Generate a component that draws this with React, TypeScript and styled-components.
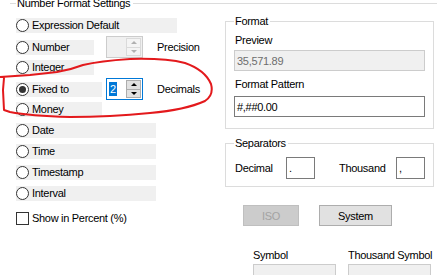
import React from "react";
import styled, { createGlobalStyle, css } from "styled-components";

const GlobalStyle = createGlobalStyle`
  html, body { margin: 0; padding: 0; background: #fff; }
  * { box-sizing: border-box; }
`;

const Page = styled.div`
  position: relative;
  width: 437px;
  height: 275px;
  overflow: hidden;
  background: #fff;
  font-family: "Liberation Sans", Arial, sans-serif;
  font-size: 11px;
  letter-spacing: -0.3px;
  color: #000;
`;

const Header = styled.div`
  display: flex;
  height: 14px;
  margin-top: -4px;
`;

const HeaderLine = styled.div<{ $short?: boolean }>`
  align-self: flex-start;
  margin-top: 7px;
  border-top: 1px solid #dcdcdc;
  ${(p) => (p.$short ? css`width: 6px; margin-left: 10px;` : css`flex: 1; margin-left: 3px;`)}
`;

const HeaderTitle = styled.div`
  line-height: 14px;
  padding-left: 1px;
  white-space: nowrap;
`;

const Body = styled.div`
  display: grid;
  grid-template-columns: 225px 209px;
`;

const LeftCol = styled.div`
  display: flex;
  flex-direction: column;
  padding-top: 5px;
  padding-left: 16px;
`;

const OptionRow = styled.div`
  display: grid;
  grid-template-columns: 90px 37px auto;
  align-items: center;
  height: 21px;
`;

const OptionLabel = styled.div<{ $w: number }>`
  display: flex;
  align-items: center;
  width: ${(p) => p.$w}px;
  height: 15px;
  background: #f0f0f0;
  white-space: nowrap;
`;

const Radio = styled.span<{ $checked?: boolean }>`
  position: relative;
  flex-shrink: 0;
  width: 13px;
  height: 13px;
  border: 1px solid #333;
  border-radius: 50%;
  background: #fff;
  ${(p) =>
    p.$checked &&
    css`
      &::after {
        content: "";
        position: absolute;
        left: 2px;
        top: 2px;
        width: 7px;
        height: 7px;
        border-radius: 50%;
        background: #333;
      }
    `}
`;

const OptionText = styled.span`
  margin-left: 3px;
  line-height: 13px;
`;

const SpinBox = styled.div<{ $disabled?: boolean; $focused?: boolean }>`
  display: flex;
  width: 37px;
  height: 22px;
  border: 1px solid ${(p) => (p.$focused ? "#0078d7" : "#cccccc")};
  background: ${(p) => (p.$disabled ? "#f0f0f0" : "#fff")};
`;

const SpinText = styled.div`
  flex: 1;
  display: flex;
  align-items: center;
  padding-left: 2px;
`;

const Selected = styled.span`
  background: #0078d7;
  color: #fff;
  line-height: 14px;
  padding: 0 1px;
`;

const SpinButtons = styled.div`
  display: flex;
  flex-direction: column;
  width: 16px;
  padding: 1px 1px 1px 0;
`;

const SpinButton = styled.div<{ $disabled?: boolean }>`
  flex: 1;
  display: flex;
  align-items: center;
  justify-content: center;
  border: 1px solid ${(p) => (p.$disabled ? "#dadada" : "#adadad")};
  background: ${(p) => (p.$disabled ? "#f4f4f4" : "#e1e1e1")};
  & + & { margin-top: -1px; }
`;

const Arrow = styled.span<{ $down?: boolean; $disabled?: boolean }>`
  width: 0;
  height: 0;
  border-left: 3px solid transparent;
  border-right: 3px solid transparent;
  ${(p) =>
    p.$down
      ? css`border-top: 3px solid ${p.$disabled ? "#b0b0b0" : "#000"};`
      : css`border-bottom: 3px solid ${p.$disabled ? "#b0b0b0" : "#000"};`}
`;

const UnitText = styled.span`
  margin-left: 14px;
`;

const CheckRow = styled.div`
  display: flex;
  align-items: center;
  height: 21px;
  margin-top: 4px;
`;

const CheckBox = styled.span`
  flex-shrink: 0;
  width: 13px;
  height: 13px;
  border: 1px solid #333;
  background: #fff;
`;

const RightCol = styled.div`
  display: flex;
  flex-direction: column;
  padding-top: 11px;
`;

const Group = styled.div<{ $mt?: number }>`
  display: flex;
  flex-direction: column;
  border: 1px solid #dcdcdc;
  padding: 0 8px 0 8px;
  margin-top: ${(p) => p.$mt ?? 0}px;
`;

const GroupTitle = styled.div`
  align-self: flex-start;
  margin-top: -7px;
  padding: 0 2px 0 1px;
  line-height: 13px;
  background: #fff;
`;

const FieldLabel = styled.div<{ $mt: number }>`
  margin-top: ${(p) => p.$mt}px;
  padding-left: 1px;
  line-height: 13px;
`;

const TextBox = styled.div<{ $mt?: number; $readonly?: boolean; $h?: number }>`
  display: flex;
  align-items: center;
  height: ${(p) => p.$h ?? 21}px;
  margin-top: ${(p) => p.$mt ?? 0}px;
  padding-left: 2px;
  border: 1px solid ${(p) => (p.$readonly ? "#cccccc" : "#7a7a7a")};
  background: ${(p) => (p.$readonly ? "#f0f0f0" : "#fff")};
  color: ${(p) => (p.$readonly ? "#6d6d6d" : "#000")};
`;

const SeparatorRow = styled.div`
  display: grid;
  grid-template-columns: 52px 29px 23px 58px 29px;
  align-items: center;
  margin-top: 7px;
  margin-bottom: 7px;
`;

const SepLabel = styled.span<{ $col: number }>`
  grid-column: ${(p) => p.$col};
  padding-left: 1px;
`;

const ButtonRow = styled.div`
  display: flex;
  margin-top: 18px;
  padding-left: 18px;
  gap: 20px;
`;

const Button = styled.div<{ $w: number; $disabled?: boolean }>`
  display: flex;
  align-items: center;
  justify-content: center;
  width: ${(p) => p.$w}px;
  height: 21px;
  border: 1px solid ${(p) => (p.$disabled ? "#bfbfbf" : "#adadad")};
  background: ${(p) => (p.$disabled ? "#cccccc" : "#e1e1e1")};
  color: ${(p) => (p.$disabled ? "#a3a3a3" : "#000")};
`;

const SymbolGrid = styled.div`
  display: grid;
  grid-template-columns: 83px 83px;
  column-gap: 12px;
  margin-top: 23px;
  padding-left: 28px;
`;

const SymbolLabel = styled.div`
  line-height: 13px;
  white-space: nowrap;
`;

const SymbolBox = styled.div`
  height: 24px;
  margin-top: 2px;
  border: 1px solid #cccccc;
  background: #f0f0f0;
`;

const Annotation = styled.svg`
  position: absolute;
  left: 0;
  top: 0;
  width: 437px;
  height: 275px;
  pointer-events: none;
`;

type Opt = { label: string; w: number; checked?: boolean; spin?: "disabled" | "focused"; unit?: string };

const options: Opt[] = [
  { label: "Expression Default", w: 161 },
  { label: "Number", w: 78, spin: "disabled", unit: "Precision" },
  { label: "Integer", w: 78 },
  { label: "Fixed to", w: 86, checked: true, spin: "focused", unit: "Decimals" },
  { label: "Money", w: 86 },
  { label: "Date", w: 140 },
  { label: "Time", w: 140 },
  { label: "Timestamp", w: 140 },
  { label: "Interval", w: 140 },
];

function Spinner({ mode }: { mode: "disabled" | "focused" }) {
  const disabled = mode === "disabled";
  return (
    <SpinBox $disabled={disabled} $focused={!disabled}>
      <SpinText>{!disabled && <Selected>2</Selected>}</SpinText>
      <SpinButtons>
        <SpinButton $disabled={disabled}>
          <Arrow $disabled={disabled} />
        </SpinButton>
        <SpinButton $disabled={disabled}>
          <Arrow $down $disabled={disabled} />
        </SpinButton>
      </SpinButtons>
    </SpinBox>
  );
}

export default function App() {
  return (
    <Page>
      <GlobalStyle />
      <Header>
        <HeaderLine $short />
        <HeaderTitle>Number Format Settings</HeaderTitle>
        <HeaderLine />
      </Header>
      <Body>
        <LeftCol>
          {options.map((o) => (
            <OptionRow key={o.label}>
              <OptionLabel $w={o.w}>
                <Radio $checked={o.checked} />
                <OptionText>{o.label}</OptionText>
              </OptionLabel>
              {o.spin && <Spinner mode={o.spin} />}
              {o.unit && <UnitText>{o.unit}</UnitText>}
            </OptionRow>
          ))}
          <CheckRow>
            <CheckBox />
            <OptionText>Show in Percent (%)</OptionText>
          </CheckRow>
        </LeftCol>
        <RightCol>
          <Group>
            <GroupTitle>Format</GroupTitle>
            <FieldLabel $mt={6}>Preview</FieldLabel>
            <TextBox $mt={3} $readonly>35,571.89</TextBox>
            <FieldLabel $mt={7}>Format Pattern</FieldLabel>
            <TextBox $mt={5}>#,##0.00</TextBox>
            <div style={{ height: 11 }} />
          </Group>
          <Group $mt={14}>
            <GroupTitle>Separators</GroupTitle>
            <SeparatorRow>
              <SepLabel $col={1}>Decimal</SepLabel>
              <TextBox $h={22}>.</TextBox>
              <SepLabel $col={4}>Thousand</SepLabel>
              <TextBox $h={22}>,</TextBox>
            </SeparatorRow>
          </Group>
          <ButtonRow>
            <Button $w={56} $disabled>ISO</Button>
            <Button $w={73}>System</Button>
          </ButtonRow>
          <SymbolGrid>
            <SymbolLabel>Symbol</SymbolLabel>
            <SymbolLabel>Thousand Symbol</SymbolLabel>
            <SymbolBox />
            <SymbolBox />
          </SymbolGrid>
        </RightCol>
      </Body>
      <Annotation viewBox="0 0 437 275">
        <path
          d="M0 77 L30 75 L57 72 Q70 70 83 65 Q100 61 130 59 Q165 58 185 63 Q205 70 211 84 Q214 95 205 101 Q185 110 150 113 Q110 117 70 117 Q30 116 10 112 L4 110 L3 90 L4 78"
          fill="none"
          stroke="#e3191c"
          strokeWidth="2"
          strokeLinejoin="round"
          strokeLinecap="round"
        />
      </Annotation>
    </Page>
  );
}
